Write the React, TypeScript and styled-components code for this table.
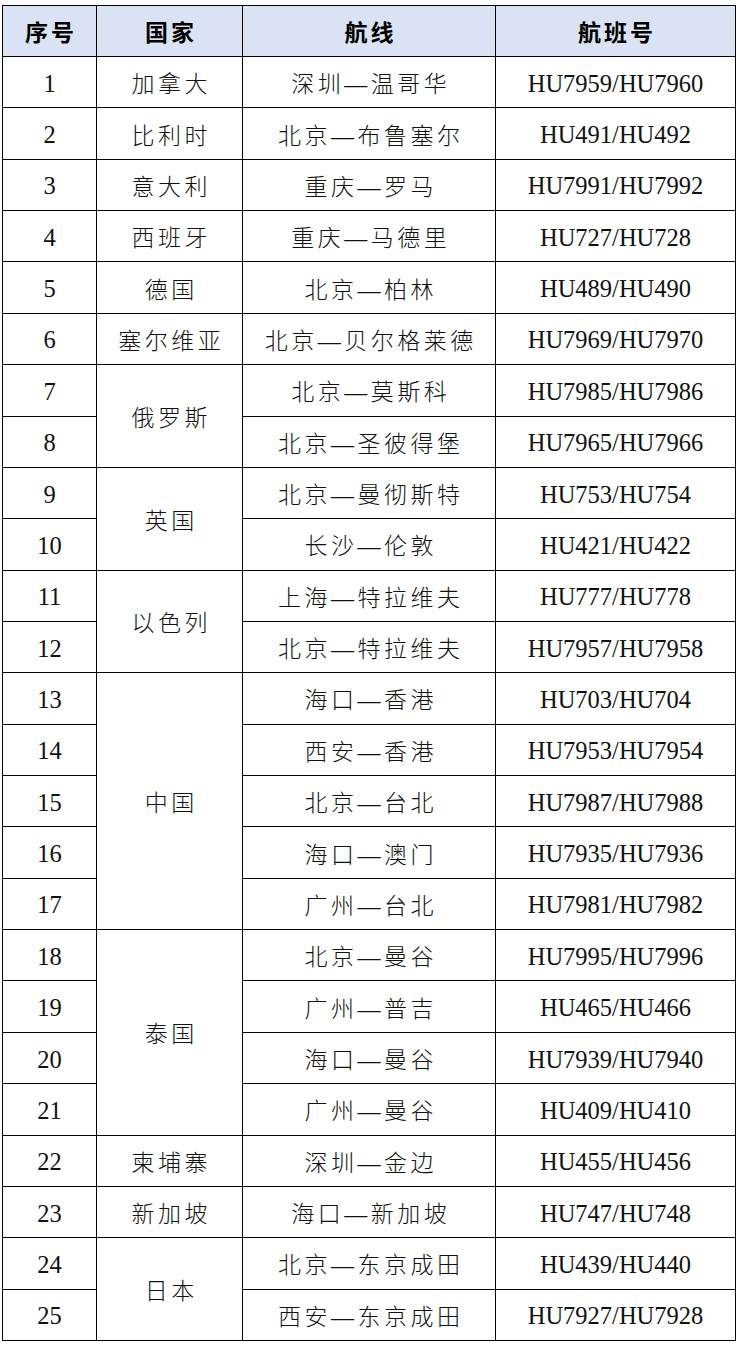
import React from "react";
import styled, { createGlobalStyle } from "styled-components";

const GlobalStyle = createGlobalStyle`
  html, body { margin: 0; padding: 0; background: #ffffff; }
  body { font-family: "Noto Sans CJK SC", sans-serif; color: #000; }
`;

const Page = styled.div`
  padding: 5px 0 0 2px;
  width: 741px;
  box-sizing: border-box;
`;

const Table = styled.table`
  border-collapse: collapse;
  table-layout: fixed;
  width: 733px;
`;

const HeadRow = styled.tr`
  height: 51px;
  background: #dae3f3;
`;

const BodyRow = styled.tr`
  height: 51.36px;
`;

const Th = styled.th`
  border: 1.5px solid #000;
  padding: 0;
  text-align: center;
  vertical-align: middle;
  font-family: "Noto Sans CJK SC", sans-serif;
  font-weight: 700;
  font-size: 23px;
  letter-spacing: 3px;
  text-indent: 3px;
`;

const Td = styled.td<{ $latin?: boolean }>`
  border: 1.5px solid #000;
  padding: ${(p) => (p.$latin ? "3px 0 0" : "0")};
  text-align: center;
  vertical-align: middle;
  white-space: nowrap;
  color: #111;
  font-family: ${(p) =>
    p.$latin
      ? `"Liberation Serif", "Times New Roman", serif`
      : `"Noto Sans CJK SC", sans-serif`};
  font-weight: ${(p) => (p.$latin ? 400 : 300)};
  font-size: ${(p) => (p.$latin ? "24.5px" : "23px")};
  letter-spacing: ${(p) => (p.$latin ? "0" : "3.5px")};
  text-indent: ${(p) => (p.$latin ? "0" : "3.5px")};
`;

const Dash = styled.span`
  font-family: "Liberation Serif", serif;
  font-weight: 400;
  letter-spacing: 3.5px;
`;

type Row = { n: number; country?: string; span?: number; route: string; flight: string };

const rows: Row[] = [
  { n: 1, country: "加拿大", route: "深圳—温哥华", flight: "HU7959/HU7960" },
  { n: 2, country: "比利时", route: "北京—布鲁塞尔", flight: "HU491/HU492" },
  { n: 3, country: "意大利", route: "重庆—罗马", flight: "HU7991/HU7992" },
  { n: 4, country: "西班牙", route: "重庆—马德里", flight: "HU727/HU728" },
  { n: 5, country: "德国", route: "北京—柏林", flight: "HU489/HU490" },
  { n: 6, country: "塞尔维亚", route: "北京—贝尔格莱德", flight: "HU7969/HU7970" },
  { n: 7, country: "俄罗斯", span: 2, route: "北京—莫斯科", flight: "HU7985/HU7986" },
  { n: 8, route: "北京—圣彼得堡", flight: "HU7965/HU7966" },
  { n: 9, country: "英国", span: 2, route: "北京—曼彻斯特", flight: "HU753/HU754" },
  { n: 10, route: "长沙—伦敦", flight: "HU421/HU422" },
  { n: 11, country: "以色列", span: 2, route: "上海—特拉维夫", flight: "HU777/HU778" },
  { n: 12, route: "北京—特拉维夫", flight: "HU7957/HU7958" },
  { n: 13, country: "中国", span: 5, route: "海口—香港", flight: "HU703/HU704" },
  { n: 14, route: "西安—香港", flight: "HU7953/HU7954" },
  { n: 15, route: "北京—台北", flight: "HU7987/HU7988" },
  { n: 16, route: "海口—澳门", flight: "HU7935/HU7936" },
  { n: 17, route: "广州—台北", flight: "HU7981/HU7982" },
  { n: 18, country: "泰国", span: 4, route: "北京—曼谷", flight: "HU7995/HU7996" },
  { n: 19, route: "广州—普吉", flight: "HU465/HU466" },
  { n: 20, route: "海口—曼谷", flight: "HU7939/HU7940" },
  { n: 21, route: "广州—曼谷", flight: "HU409/HU410" },
  { n: 22, country: "柬埔寨", route: "深圳—金边", flight: "HU455/HU456" },
  { n: 23, country: "新加坡", route: "海口—新加坡", flight: "HU747/HU748" },
  { n: 24, country: "日本", span: 2, route: "北京—东京成田", flight: "HU439/HU440" },
  { n: 25, route: "西安—东京成田", flight: "HU7927/HU7928" },
];

function Route({ text }: { text: string }) {
  const [from, to] = text.split("—");
  return (
    <>
      {from}
      <Dash>—</Dash>
      {to}
    </>
  );
}

export default function App() {
  return (
    <>
      <GlobalStyle />
      <Page>
        <Table>
          <colgroup>
            <col style={{ width: 94 }} />
            <col style={{ width: 146 }} />
            <col style={{ width: 253 }} />
            <col style={{ width: 240 }} />
          </colgroup>
          <thead>
            <HeadRow>
              <Th>序号</Th>
              <Th>国家</Th>
              <Th>航线</Th>
              <Th>航班号</Th>
            </HeadRow>
          </thead>
          <tbody>
            {rows.map((r) => (
              <BodyRow key={r.n}>
                <Td $latin>{r.n}</Td>
                {r.country && <Td rowSpan={r.span ?? 1}>{r.country}</Td>}
                <Td>
                  <Route text={r.route} />
                </Td>
                <Td $latin>{r.flight}</Td>
              </BodyRow>
            ))}
          </tbody>
        </Table>
      </Page>
    </>
  );
}
